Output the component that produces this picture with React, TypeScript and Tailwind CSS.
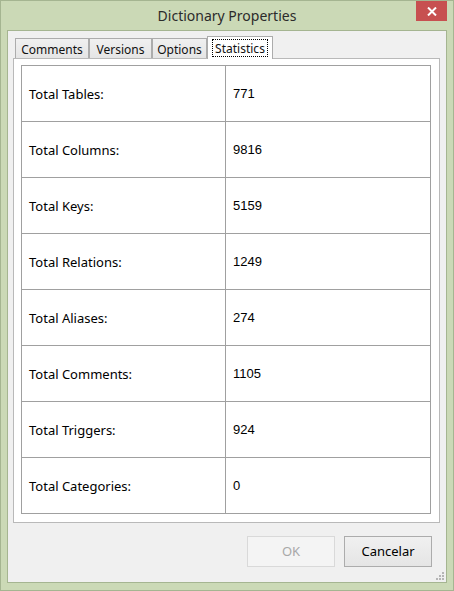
import React from "react";

const rows: [string, string][] = [
  ["Total Tables:", "771"],
  ["Total Columns:", "9816"],
  ["Total Keys:", "5159"],
  ["Total Relations:", "1249"],
  ["Total Aliases:", "274"],
  ["Total Comments:", "1105"],
  ["Total Triggers:", "924"],
  ["Total Categories:", "0"],
];

const font = { fontFamily: '"Noto Sans", "Open Sans", sans-serif' };

export default function App() {
  return (
    <div
      className="w-[454px] h-[591px] bg-[#cbd9b6] border border-[#a5b591] flex flex-col px-[6px] pb-[7px] text-[#111111]"
      style={font}
    >
      {/* title bar */}
      <div className="relative h-[29px] flex items-center justify-center shrink-0">
        <span className="text-[14px] text-[#2b2b2b] leading-none">Dictionary Properties</span>
        <div className="absolute right-0 top-0 w-[31px] h-[20px] bg-[#c75050] flex items-center justify-center">
          <svg width="10" height="9" viewBox="0 0 10 9">
            <path d="M1 0.5 L9 8.5 M9 0.5 L1 8.5" stroke="#ffffff" strokeWidth="2" />
          </svg>
        </div>
      </div>

      {/* client */}
      <div className="flex-1 border border-[#a5b591] bg-[#f0f0f0] flex flex-col relative">
        {/* tabs */}
        <div className="flex items-end h-[27px] pl-[7px] pt-[5px]">
          <div className="w-[74px] h-[20px] border border-b-0 border-[#acacac] bg-gradient-to-b from-[#f0f0f0] to-[#e5e5e5] flex items-center justify-center text-[12px] leading-none pt-[3px]">
            Comments
          </div>
          <div className="w-[63px] h-[20px] border border-b-0 border-[#acacac] bg-gradient-to-b from-[#f0f0f0] to-[#e5e5e5] flex items-center justify-center text-[12px] leading-none pt-[3px]">
            Versions
          </div>
          <div className="w-[55px] h-[20px] border border-b-0 border-[#acacac] bg-gradient-to-b from-[#f0f0f0] to-[#e5e5e5] flex items-center justify-center text-[12px] leading-none pt-[3px]">
            Options
          </div>
          <div className="relative z-10 -mb-[1px] w-[66px] h-[23px] border border-b-0 border-[#acacac] bg-white flex items-start justify-center pt-[2px]">
            <span className="border border-dotted border-black px-[2px] h-[18px] flex items-center text-[12px] leading-none pt-[1px]">
              Statistics
            </span>
          </div>
        </div>

        {/* panel */}
        <div className="ml-[5px] mr-[6px] h-[465px] border border-[#b9b9b9] bg-white pt-[6px] pl-[7px]">
          <div className="w-[410px] border-r border-b border-[#a0a0a0] flex flex-col">
            {rows.map(([k, v]) => (
              <div key={k} className="h-[56px] flex">
                <div className="w-[204px] border-l border-t border-[#a0a0a0] flex items-center pl-[7px] pt-[2px] text-[13px] text-black">
                  {k}
                </div>
                <div
                  className="flex-1 border-l border-t border-[#a0a0a0] flex items-center pl-[7px] pt-[1px] text-[13px] text-black"
                  style={{ fontFamily: '"Liberation Sans", Arial, sans-serif' }}
                >
                  {v}
                </div>
              </div>
            ))}
          </div>
        </div>

        {/* buttons */}
        <div className="flex justify-end gap-[9px] pr-[14px] mt-[13px]">
          <div className="w-[88px] h-[31px] border border-[#d9d9d9] bg-[#f4f4f4] flex items-center justify-center text-[13px] text-[#a8a8a8]">
            OK
          </div>
          <div className="w-[88px] h-[31px] border border-[#acacac] bg-gradient-to-b from-[#f0f0f0] to-[#e5e5e5] flex items-center justify-center text-[13px] text-black">
            Cancelar
          </div>
        </div>

        {/* grip */}
        <svg className="absolute right-[1px] bottom-[1px]" width="10" height="10" viewBox="0 0 10 10">
          <g fill="#b5b5b5">
            <rect x="7" y="1" width="2" height="2" />
            <rect x="4" y="4" width="2" height="2" />
            <rect x="7" y="4" width="2" height="2" />
            <rect x="1" y="7" width="2" height="2" />
            <rect x="4" y="7" width="2" height="2" />
            <rect x="7" y="7" width="2" height="2" />
          </g>
        </svg>
      </div>
    </div>
  );
}
